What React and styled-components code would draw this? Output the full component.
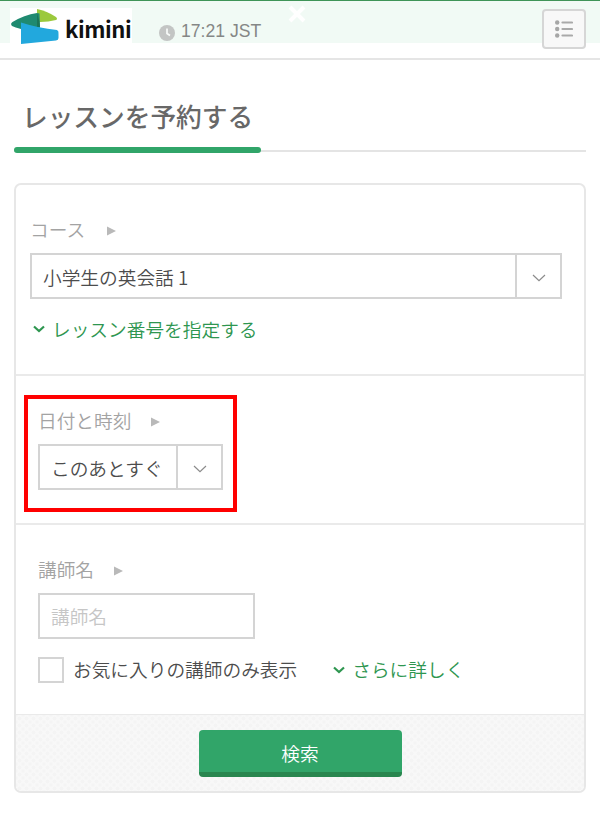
import React, { Component } from "react";
import styled, { createGlobalStyle } from "styled-components";

export default class App extends Component {
  constructor(props) {
    super(props);
    this.state = { teacher: "", favorite: false };
  }

  renderHeader = () => {
    return (
      <StyledHeader>
        <StyledHeaderBand>
          <StyledLogo>
            <LogoMark />
            <StyledLogoText>kimini</StyledLogoText>
          </StyledLogo>
          <StyledClock>
            <ClockIcon />
            <StyledTime>17:21 JST</StyledTime>
          </StyledClock>
          <CloseIcon />
          <StyledMenuButton aria-label="menu">
            <ListIcon />
          </StyledMenuButton>
        </StyledHeaderBand>
      </StyledHeader>
    );
  };

  renderCourse = () => {
    return (
      <StyledCourse>
        <StyledLabel gap={22}>
          コース
          <LabelArrow />
        </StyledLabel>
        <StyledSelect>
          <StyledSelectText>小学生の英会話 1</StyledSelectText>
          <StyledSelectArrow>
            <SelectChevron />
          </StyledSelectArrow>
        </StyledSelect>
        <StyledMoreLink>
          <LinkChevron />
          レッスン番号を指定する
        </StyledMoreLink>
      </StyledCourse>
    );
  };

  renderDate = () => {
    return (
      <StyledDate>
        <StyledHighlight>
          <StyledLabel gap={20}>
            日付と時刻
            <LabelArrow />
          </StyledLabel>
          <StyledSelect>
            <StyledSelectText>このあとすぐ</StyledSelectText>
            <StyledSelectArrow>
              <SelectChevron />
            </StyledSelectArrow>
          </StyledSelect>
        </StyledHighlight>
      </StyledDate>
    );
  };

  renderTeacher = () => {
    return (
      <StyledTeacher>
        <StyledLabel gap={20}>
          講師名
          <LabelArrow />
        </StyledLabel>
        <StyledInput
          placeholder="講師名"
          value={this.state.teacher}
          onChange={(e) => this.setState({ teacher: e.target.value })}
        />
        <StyledOptions>
          <StyledCheckLabel>
            <StyledCheckbox
              type="checkbox"
              checked={this.state.favorite}
              onChange={() =>
                this.setState({ favorite: !this.state.favorite })
              }
            />
            <StyledOptionText>お気に入りの講師のみ表示</StyledOptionText>
          </StyledCheckLabel>
          <StyledDetailLink>
            <LinkChevron />
            <StyledOptionText>さらに詳しく</StyledOptionText>
          </StyledDetailLink>
        </StyledOptions>
      </StyledTeacher>
    );
  };

  render = () => {
    return (
      <>
        <GlobalStyle />
        {this.renderHeader()}
        <StyledMain>
          <StyledTitleRow>
            <StyledTitle>レッスンを予約する</StyledTitle>
          </StyledTitleRow>
          <StyledPanel>
            {this.renderCourse()}
            {this.renderDate()}
            {this.renderTeacher()}
            <StyledFooter>
              <StyledSearchButton>検索</StyledSearchButton>
            </StyledFooter>
          </StyledPanel>
        </StyledMain>
      </>
    );
  };
}

const LogoMark = () => (
  <StyledLogoMark width="48" height="36" viewBox="0 0 48 36">
    <path d="M26 0 Q36 2 45 8 Q47 10 45 11 Q36 13.500 26 13 Z" fill="#9bc93c" />
    <path d="M26 4 L28.500 4.500 L29 18.500 L10 20 Q4 18.500 1 17 Q-1 14.500 1.500 13 Q13 6 26 4 Z" fill="#1f8a70" />
    <path d="M26 4 L28.500 13 L29 18.500 L26 18.500 Z" fill="#1b7557" />
    <path d="M10 13.500 Q27 19 46 21 Q48 22 47.500 25 V29 Q47.500 31 45 31.500 L10 35 Z" fill="#22a8dd" />
  </StyledLogoMark>
);

const ClockIcon = () => (
  <svg width="16" height="16" viewBox="0 0 16 16">
    <circle cx="8" cy="8" r="8" fill="#c3c5c4" />
    <path d="M8 3.500 V8.500 L11 10.500" fill="none" stroke="#f8fbf9" strokeWidth="1.700" />
  </svg>
);

const CloseIcon = () => (
  <StyledClose width="18" height="18" viewBox="0 0 18 18">
    <path d="M2 2 L16 16 M16 2 L2 16" stroke="#ffffff" strokeWidth="4" />
  </StyledClose>
);

const ListIcon = () => (
  <svg width="18" height="18" viewBox="0 0 18 18">
    {[2.5, 9, 15.5].map((y) => (
      <g key={y}>
        <circle cx="2.200" cy={y} r="2.200" fill="#a6a6a6" />
        <path d={`M7.500 ${y} H17`} stroke="#a9a9a9" strokeWidth="2.200" strokeLinecap="round" />
      </g>
    ))}
  </svg>
);

const LabelArrow = () => (
  <svg width="9" height="10" viewBox="0 0 9 10">
    <path d="M0 0.500 L9 5 L0 9.500 Z" fill="#b9b9b9" />
  </svg>
);

const SelectChevron = () => (
  <svg width="14" height="8" viewBox="0 0 14 8">
    <path d="M1 1 L7 6.700 L13 1" fill="none" stroke="#8b8b8b" strokeWidth="1.200" />
  </svg>
);

const LinkChevron = () => (
  <svg width="12" height="8" viewBox="0 0 12 8">
    <path d="M1 1.500 L6 6 L11 1.500" fill="none" stroke="#2e9650" strokeWidth="2.200" />
  </svg>
);

const GlobalStyle = createGlobalStyle`
  * {
    box-sizing: border-box;
  }
  body {
    margin: 0;
    background: #ffffff;
    color: #4c4c4c;
    font-family: "Noto Sans CJK JP", sans-serif;
    font-size: 18.7px;
    font-weight: 350;
  }
  button, input {
    font: inherit;
  }
`;

const StyledHeader = styled.header`
  height: 60px;
  border-top: 1px solid #3f9458;
  border-bottom: 2px solid #e5e5e5;
`;

const StyledHeaderBand = styled.div`
  position: relative;
  display: flex;
  align-items: flex-start;
  height: 42px;
  padding: 0 14px 0 10px;
  background: #f1faf5;
`;

const StyledLogo = styled.div`
  display: flex;
  width: 122px;
  height: 42px;
  margin-top: 7px;
  padding: 1px 0 0 1px;
  background: #ffffff;
`;

const StyledLogoMark = styled.svg`
  flex: none;
`;

const StyledLogoText = styled.div`
  margin: 6px 0 0 6px;
  color: #111111;
  font-family: "Noto Sans CJK JP", sans-serif;
  font-size: 22px;
  font-weight: 700;
  letter-spacing: -0.4px;
  line-height: 26px;
`;

const StyledClock = styled.div`
  display: flex;
  align-items: center;
  gap: 6px;
  margin: 19px 0 0 27px;
  height: 26px;
`;

const StyledTime = styled.div`
  margin-top: -4px;
  color: #858786;
  font-family: "Liberation Sans", sans-serif;
  font-size: 17.6px;
  line-height: 22px;
  white-space: nowrap;
`;

// floats over the band, centered
const StyledClose = styled.svg`
  position: absolute;
  top: 4px;
  left: 288px;
`;

const StyledMenuButton = styled.button`
  display: flex;
  align-items: center;
  justify-content: center;
  width: 44px;
  height: 40px;
  margin: 8px 0 0 auto;
  padding: 0;
  border: 2px solid #d6d6d6;
  border-radius: 4px;
  background: #f8f8f8;
`;

const StyledMain = styled.main`
  padding: 31px 14px 0;
`;

const StyledTitleRow = styled.div`
  display: flex;
  height: 61px;
  border-bottom: 2px solid #e4e4e4;
`;

const StyledTitle = styled.h1`
  width: 247px;
  height: 62px;
  margin: 0;
  padding-left: 8px;
  color: #686868;
  font-size: 25.7px;
  font-weight: 500;
  line-height: 50px;
  white-space: nowrap;

  &::after {
    content: "";
    display: block;
    width: 247px;
    height: 6px;
    margin: 6px 0 0 -8px;
    border-radius: 3px;
    background: #31a569;
  }
`;

const StyledPanel = styled.div`
  width: 572px;
  height: 610px;
  margin-top: 31px;
  border: 2px solid #e7e7e7;
  border-radius: 7px;
  overflow: hidden;
`;

const StyledSection = styled.section`
  display: flex;
  flex-direction: column;
  align-items: flex-start;
  border-bottom: 2px solid #eaeaea;
`;

const StyledCourse = styled(StyledSection)`
  height: 191px;
  padding: 30px 22px 0 14px;
`;

const StyledDate = styled(StyledSection)`
  height: 149px;
  padding: 19px 0 0 8px;
`;

const StyledTeacher = styled(StyledSection)`
  height: 190px;
  padding: 30px 0 0 22px;
  border-bottom-width: 1px;
`;

const StyledHighlight = styled.div`
  display: flex;
  flex-direction: column;
  width: 213px;
  height: 117px;
  padding: 7px 10px 0;
  border: 4px solid #ff0000;
`;

const StyledLabel = styled.div`
  display: flex;
  align-items: center;
  gap: ${({ gap }) => gap}px;
  height: 28px;
  margin-bottom: 10px;
  color: #a3a3a3;
  line-height: 28px;

  svg {
    margin-top: 4px;
  }
`;

const StyledSelect = styled.div`
  display: flex;
  align-items: stretch;
  width: 100%;
  height: 46px;
  border: 2px solid #d4d4d4;
`;

const StyledSelectText = styled.div`
  flex: 1;
  padding-left: 11px;
  line-height: 43px;
  white-space: nowrap;
`;

const StyledSelectArrow = styled.div`
  display: flex;
  align-items: center;
  justify-content: center;
  width: 45px;
  padding-top: 4px;
  border-left: 2px solid #d4d4d4;
`;

const StyledMoreLink = styled.a`
  display: flex;
  align-items: center;
  gap: 7px;
  height: 28px;
  margin: 16px 0 0 3px;
  color: #2e9650;
  line-height: 28px;
`;

const StyledInput = styled.input`
  width: 217px;
  height: 46px;
  padding: 0 11px 1px;
  border: 2px solid #d4d4d4;
  border-radius: 0;
  background: #ffffff;

  &::placeholder {
    color: #c6c6c6;
  }
`;

const StyledOptions = styled.div`
  display: flex;
  align-items: center;
  height: 28px;
  margin-top: 17px;
`;

const StyledCheckLabel = styled.label`
  display: flex;
  align-items: center;
  gap: 9px;
`;

const StyledCheckbox = styled.input`
  appearance: none;
  width: 26px;
  height: 26px;
  margin: 0;
  border: 2px solid #d4d4d4;
  background: #ffffff;

  &:checked {
    background: #31a569;
  }
`;

const StyledOptionText = styled.span`
  margin-top: -2px;
  line-height: 26px;
`;

const StyledDetailLink = styled.a`
  display: flex;
  align-items: center;
  gap: 7px;
  margin-left: 36px;
  color: #2e9650;
`;

const StyledFooter = styled.div`
  display: flex;
  justify-content: center;
  height: 76px;
  padding-top: 15px;
  background-color: #f8f8f8;
  background-image: radial-gradient(#f4f4f4 35%, transparent 45%),
    radial-gradient(#f4f4f4 35%, transparent 45%);
  background-position: 0 0, 3.5px 3.5px;
  background-size: 7px 7px;
`;

const StyledSearchButton = styled.button`
  width: 203px;
  height: 47px;
  padding: 2px 0 0;
  border: 0;
  border-bottom: 5px solid #29864f;
  border-radius: 4px;
  background: #31a569;
  color: #ffffff;
`;
